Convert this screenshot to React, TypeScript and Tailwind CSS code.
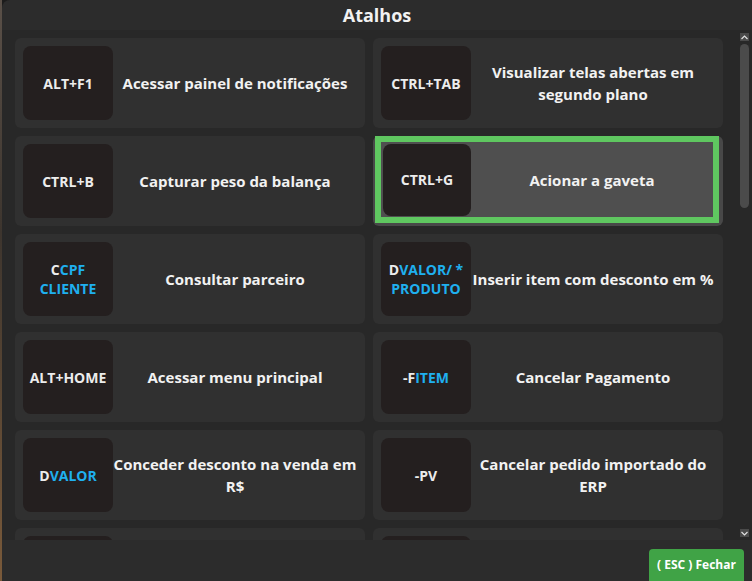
import React from "react";

type Shortcut = {
  prefix: string;
  accent?: string;
  label: string;
  active?: boolean;
};

const shortcuts: Shortcut[] = [
  { prefix: "ALT+F1", label: "Acessar painel de notificações" },
  { prefix: "CTRL+TAB", label: "Visualizar telas abertas em segundo plano" },
  { prefix: "CTRL+B", label: "Capturar peso da balança" },
  { prefix: "CTRL+G", label: "Acionar a gaveta", active: true },
  { prefix: "C", accent: "CPF CLIENTE", label: "Consultar parceiro" },
  { prefix: "D", accent: "VALOR/ * PRODUTO", label: "Inserir item com desconto em %" },
  { prefix: "ALT+HOME", label: "Acessar menu principal" },
  { prefix: "-F", accent: "ITEM", label: "Cancelar Pagamento" },
  { prefix: "D", accent: "VALOR", label: "Conceder desconto na venda em R$" },
  { prefix: "-PV", label: "Cancelar pedido importado do ERP" },
  { prefix: "", label: "" },
  { prefix: "", label: "" },
];

const KeyBox = ({ item, className }: { item: Shortcut; className: string }) => (
  <div
    className={`shrink-0 rounded-lg bg-[#241f1f] flex items-center justify-center text-center px-[2px] text-[14px] font-bold leading-[19px] text-[#ececec] ${className}`}
  >
    <span>
      {item.prefix}
      {item.accent && <span className="text-[#1fb0ef]">{item.accent}</span>}
    </span>
  </div>
);

const ShortcutCard = ({ item }: { item: Shortcut }) => {
  if (item.active) {
    return (
      <div className="h-[90px] rounded-md bg-[#484848] pl-[2px] pr-[4px] pb-[3px]">
        <div className="h-full flex items-center border-[6px] border-[#5fc760] bg-[#4f4f4f]">
          <KeyBox item={item} className="w-[88px] h-[72px] ml-[2px]" />
          <div className="flex-1 text-center text-[15px] font-bold leading-[22px] text-[#f2f2f2]">
            {item.label}
          </div>
        </div>
      </div>
    );
  }
  return (
    <div className="h-[90px] rounded-md bg-[#303030] p-2 flex items-center">
      <KeyBox item={item} className="w-[90px] h-[74px]" />
      <div className="flex-1 text-center text-[15px] font-bold leading-[22px] text-[#f2f2f2]">
        {item.label}
      </div>
    </div>
  );
};

const ScrollArrow = ({ up }: { up?: boolean }) => (
  <div className="w-[9px] h-[8px] bg-[#4a4a4a] flex items-center justify-center">
    <svg width="7" height="5" viewBox="0 0 7 5">
      <path
        d={up ? "M0.5 4 L3.5 1 L6.5 4" : "M0.5 1 L3.5 4 L6.5 1"}
        fill="none"
        stroke="#e0e0e0"
        strokeWidth="1.2"
      />
    </svg>
  </div>
);

export default function App() {
  return (
    <div
      className="w-[752px] h-[581px] flex bg-[#1c1c1c] overflow-hidden"
      style={{ fontFamily: '"Open Sans", "Noto Sans", sans-serif' }}
    >
      <div className="w-[2px] bg-[linear-gradient(#5a5048,#3d352e_40%,#7a5a3a)]" />
      <div className="flex-1 flex flex-col bg-[#2c2c2c] rounded-tl-lg">
        <div className="h-[30px] flex items-center justify-center text-[18px] font-bold text-[#f2f2f2]">
          Atalhos
        </div>
        <div className="h-[510px] flex bg-[#282828]">
          <div className="flex-1 overflow-hidden pl-[13px] pt-2">
            <div className="w-[708px] grid grid-cols-2 gap-2">
              {shortcuts.map((item, i) => (
                <ShortcutCard key={i} item={item} />
              ))}
            </div>
          </div>
          <div className="w-[17px] flex flex-col pl-[5px] pt-[3px] pb-[3px]">
            <ScrollArrow up />
            <div className="flex-1 pt-[3px]">
              <div className="w-[9px] h-[164px] rounded-full bg-[#4b4b4b]" />
            </div>
            <ScrollArrow />
          </div>
        </div>
        <div className="flex-1 flex justify-end items-end pr-[8px]">
          <button className="h-[32px] w-[95px] rounded-t-[4px] bg-[#40a346] text-white text-[12px] font-bold">
            ( ESC ) Fechar
          </button>
        </div>
      </div>
    </div>
  );
}
